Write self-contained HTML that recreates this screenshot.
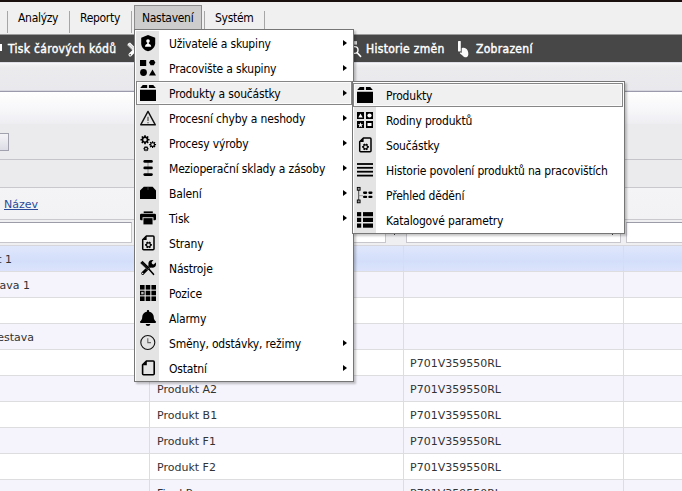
<!DOCTYPE html><html><head><meta charset="utf-8"><title>Nastavení</title><style>
html,body{margin:0;padding:0}
body{width:682px;height:491px;overflow:hidden;position:relative;background:#f0f0f0;font-family:"DejaVu Sans Condensed","DejaVu Sans","Liberation Sans",sans-serif;font-size:12px;color:#000}
div,span,a,svg{position:absolute;box-sizing:border-box}
.ic{overflow:visible}
.topbar{left:0;top:0;width:682px;height:2px;background:#1a100d}
.msep{top:11px;width:1px;height:22px;background:#a6a6a6}
.mi{top:10px;height:16px;line-height:16px;white-space:nowrap;letter-spacing:-0.3px}
.mact{left:134px;top:5px;width:68px;height:25px;background:#cdcdcd;border:1px solid #8c8c8c}
.toolbar{left:0;top:34px;width:682px;height:28px;background:#474747;border-top:1px solid #9c9c9c}
.tb{top:41px;height:16px;line-height:16px;color:#fff;-webkit-text-stroke:0.4px #fff;white-space:nowrap;letter-spacing:0.3px}
.band1{left:0;top:62px;width:682px;height:29px;background:linear-gradient(#d2d2de 0,#f7f7fa 1.5px,#f0f0f3 3px,#ebebee 6px,#e9e9ed 100%)}
.line1{left:0;top:90px;width:682px;height:2px;background:linear-gradient(#d6d6de 50%,#9a9aac 50%)}
.band2{left:0;top:92px;width:682px;height:32px;background:linear-gradient(#ffffff,#f6f6f9 60%,#eeeef2)}
.band3{left:0;top:124px;width:682px;height:35px;background:#ebebee}
.line2{left:0;top:159px;width:682px;height:1px;background:#c4c4ca}
.band4{left:0;top:160px;width:682px;height:27px;background:#ebebee}
.line3{left:0;top:187px;width:682px;height:1px;background:#c9c9cd}
.hdr{left:0;top:188px;width:682px;height:32px;background:linear-gradient(#f4f4f6,#f2f2f4);border-bottom:1px solid #c9c9ce}
.flt{left:0;top:220px;width:682px;height:26px;background:#efeff2;border-bottom:1px solid #d6d6dc}
.inp{top:222px;height:21px;background:#fff;border:1px solid #c6c6cc;border-top-color:#9c9ca8}
.btn{left:-2px;top:133px;width:11px;height:18px;border:1px solid #a2a2ae;background:linear-gradient(#f4f4f8,#dcdce6)}
.hl{font-family:"DejaVu Sans","Liberation Sans",sans-serif;font-size:11px;color:#2c4a9a;text-decoration:underline;left:4px;top:197px;line-height:15px;white-space:nowrap}
.row{left:0;width:682px;height:26px;border-bottom:1px solid #dddde0}
.odd{background:#f5f3fb}
.even{background:#fff}
.sel{background:linear-gradient(#dfe7fc,#d3defa 60%,#dbe4fb)}
.cell{font-family:"DejaVu Sans","Liberation Sans",sans-serif;font-size:11px;color:#333;line-height:14px;white-space:nowrap}
.vsep{width:1px;background:#dddde0;top:246px;height:245px}
.pop{background:#fff;border:1px solid #767676;box-shadow:2px 2px 2px rgba(0,0,0,0.22)}
.icol{background:#e4e4e4}
.it{height:16px;line-height:16px;white-space:nowrap;letter-spacing:-0.17px}
.hi{background:#f0f0f0;border:1px solid #868686;box-shadow:inset 0 0 0 1px #fbfbfb}
.arr{width:0;height:0;border-left:4px solid #000;border-top:3.5px solid transparent;border-bottom:3.5px solid transparent}
</style></head><body>
<div class="topbar"></div>
<div class="msep" style="left:7px"></div>
<div class="msep" style="left:69px"></div>
<div class="msep" style="left:131px"></div>
<div class="msep" style="left:204px"></div>
<div class="msep" style="left:264px"></div>
<div class="mact"></div>
<span class="mi" style="left:18px">Analýzy</span>
<span class="mi" style="left:80px">Reporty</span>
<span class="mi" style="left:142px">Nastavení</span>
<span class="mi" style="left:215px">Systém</span>
<div class="toolbar"></div>
<div style="left:0;top:44px;width:2px;height:7px;background:#fff"></div>
<span class="tb" style="left:8px">Tisk čárových kódů</span>
<span class="tb" style="left:366px">Historie změn</span>
<span class="tb" style="left:476px">Zobrazení</span>
<svg class="ic" style="left:126px;top:42px" width="16" height="16" viewBox="0 0 16 16" ><path d="M2,1.4L4,0.6L9,5.6L6.4,8.2L1.4,3.2Z" fill="#fff"/><path d="M3,1.6L7.6,6.2M2,2.8L6.6,7.4" stroke="#777" stroke-width="0.5"/><path d="M9,8L4.2,12.8" stroke="#fff" stroke-width="3.4" stroke-linecap="round"/><circle cx="4.2" cy="12.8" r="0.8" fill="#464646"/></svg>
<svg class="ic" style="left:346px;top:40px" width="16" height="18" viewBox="0 0 16 18" ><rect x="8.2" y="1.1" width="2.8" height="3.5" fill="#dcdcdc"/><circle cx="8.6" cy="10" r="3.4" fill="none" stroke="#fff" stroke-width="1.4"/><path d="M11.2,12.8L14.6,16.4" stroke="#fff" stroke-width="1.6" stroke-linecap="round"/></svg>
<svg class="ic" style="left:456px;top:40px" width="14" height="18" viewBox="0 0 14 18" ><rect x="2" y="1" width="2.8" height="10.4" rx="0.6" fill="#fafafa"/><path d="M5.7,8.3C7.5,7.3 10.5,7.9 11.6,10.4C12.8,13 12.6,16 11,17C9.5,17.8 7.5,17 6.5,15.5L4,13.6C3.6,13 4.2,12.4 5,12.6L5.7,12.9Z" fill="#fafafa"/></svg>
<div class="band1"></div>
<div class="line1"></div>
<div class="band2"></div>
<div class="band3"></div>
<div class="line2"></div>
<div class="band4"></div>
<div class="line3"></div>
<div class="hdr"></div>
<div class="flt"></div>
<div class="btn"></div>
<a class="hl">Název</a>
<div class="inp" style="left:-2px;width:134px"></div>
<div class="inp" style="left:150px;width:236px"></div>
<div class="inp" style="left:406px;width:215px"></div>
<div class="inp" style="left:626px;width:60px"></div>
<div style="left:394px;top:233px;width:1px;height:2px;background:#444"></div>
<div style="left:612px;top:233px;width:1px;height:2px;background:#444"></div>
<div class="row sel" style="top:246px"></div>
<span class="cell" style="right:682px;top:253px"></span>
<div class="row odd" style="top:272px"></div>
<span class="cell" style="right:682px;top:279px"></span>
<div class="row even" style="top:298px"></div>
<div class="row odd" style="top:324px"></div>
<span class="cell" style="right:682px;top:331px"></span>
<div class="row even" style="top:350px"></div>
<div class="row odd" style="top:376px"></div>
<div class="row even" style="top:402px"></div>
<div class="row odd" style="top:428px"></div>
<div class="row even" style="top:454px"></div>
<div class="row odd" style="top:480px"></div>
<span class="cell" style="left:157px;top:357px">Produkt A1</span>
<span class="cell" style="left:410px;top:357px">P701V359550RL</span>
<span class="cell" style="left:157px;top:383px">Produkt A2</span>
<span class="cell" style="left:410px;top:383px">P701V359550RL</span>
<span class="cell" style="left:157px;top:409px">Produkt B1</span>
<span class="cell" style="left:410px;top:409px">P701V359550RL</span>
<span class="cell" style="left:157px;top:435px">Produkt F1</span>
<span class="cell" style="left:410px;top:435px">P701V359550RL</span>
<span class="cell" style="left:157px;top:461px">Produkt F2</span>
<span class="cell" style="left:410px;top:461px">P701V359550RL</span>
<span class="cell" style="left:157px;top:487px">Final Pro</span>
<span class="cell" style="left:410px;top:487px">P701V359550RL</span>
<span class="cell" style="left:-188px;width:200px;text-align:right;top:253px">t 1</span>
<span class="cell" style="left:-170px;width:200px;text-align:right;top:279px">ava 1</span>
<span class="cell" style="left:-166px;width:200px;text-align:right;top:331px">estava</span>
<div class="vsep" style="left:149px"></div>
<div class="vsep" style="left:403px"></div>
<div class="vsep" style="left:623px"></div>
<div class="pop" style="left:134px;top:29px;width:220px;height:353px"></div>
<div class="icol" style="left:136px;top:31px;width:23px;height:350px"></div>
<div class="hi" style="left:136px;top:81px;width:216px;height:24px"></div>
<svg class="ic" style="left:140px;top:35px" width="16" height="17" viewBox="0 0 16 17" ><path d="M8,0L15.2,2.8V8.2C15.2,12 12.2,15.2 8,16.3C3.8,15.2 1.2,12 1.2,8.2V2.8Z"/><circle cx="8" cy="6.1" r="1.8" fill="#fff"/><rect x="7.2" y="7.4" width="1.6" height="2" fill="#fff"/><path d="M5,11.8C5,9.7 6.3,8.8 8,8.8C9.7,8.8 11.2,9.7 11.2,11.8Z" fill="#fff"/></svg>
<span class="it" style="left:169px;top:36px">Uživatelé a skupiny</span>
<div class="arr" style="left:343px;top:40.0px"></div>
<svg class="ic" style="left:140px;top:60px" width="16" height="16" viewBox="0 0 16 16" ><rect x="0" y="0" width="6.2" height="6"/><path d="M10.6,0h3.2l1.6,2.6l-1.6,2.6h-3.2l-1.6,-2.6z"/><circle cx="3.5" cy="12.5" r="3.4"/><path d="M12.5,9.4L16,15.4H9Z"/></svg>
<span class="it" style="left:169px;top:61px">Pracovište a skupiny</span>
<div class="arr" style="left:343px;top:65.0px"></div>
<svg class="ic" style="left:140px;top:85px" width="16" height="16" viewBox="0 0 16 16" ><path d="M2.8,0H7.2V2.9H0.2Z M8.9,0H13.2L15.8,2.9H8.9Z M0,4.8H16V16H0Z"/></svg>
<span class="it" style="left:169px;top:86px">Produkty a součástky</span>
<div class="arr" style="left:343px;top:90.0px"></div>
<svg class="ic" style="left:140px;top:110px" width="16" height="16" viewBox="0 0 16 16" ><path d="M8,1.4L15.3,14.8H0.7Z" fill="none" stroke="#111" stroke-width="1.4" stroke-linejoin="round"/><path d="M8,6.8V11" stroke="#555" stroke-width="1.3"/><circle cx="8" cy="12.7" r="0.75" fill="#555"/></svg>
<span class="it" style="left:169px;top:111px">Procesní chyby a neshody</span>
<div class="arr" style="left:343px;top:115.0px"></div>
<svg class="ic" style="left:140px;top:135px" width="16" height="16" viewBox="0 0 16 16" ><path fill-rule="evenodd" d="M8.17,3.78 L9.54,3.94 L9.54,5.46 L8.17,5.62 L7.89,6.29 L8.74,7.37 L7.67,8.44 L6.59,7.59 L5.92,7.87 L5.76,9.24 L4.24,9.24 L4.08,7.87 L3.41,7.59 L2.33,8.44 L1.26,7.37 L2.11,6.29 L1.83,5.62 L0.46,5.46 L0.46,3.94 L1.83,3.78 L2.11,3.11 L1.26,2.03 L2.33,0.96 L3.41,1.81 L4.08,1.53 L4.24,0.16 L5.76,0.16 L5.92,1.53 L6.59,1.81 L7.67,0.96 L8.74,2.03 L7.89,3.11Z M3.30,4.70 a1.70,1.70 0 1,0 3.40,0 a1.70,1.70 0 1,0 -3.40,0Z"/><path fill-rule="evenodd" d="M15.00,8.90 L16.05,9.03 L16.05,10.17 L15.00,10.30 L14.79,10.80 L15.45,11.63 L14.63,12.45 L13.80,11.79 L13.30,12.00 L13.17,13.05 L12.03,13.05 L11.90,12.00 L11.40,11.79 L10.57,12.45 L9.75,11.63 L10.41,10.80 L10.20,10.30 L9.15,10.17 L9.15,9.03 L10.20,8.90 L10.41,8.40 L9.75,7.57 L10.57,6.75 L11.40,7.41 L11.90,7.20 L12.03,6.15 L13.17,6.15 L13.30,7.20 L13.80,7.41 L14.63,6.75 L15.45,7.57 L14.79,8.40Z M11.30,9.60 a1.30,1.30 0 1,0 2.60,0 a1.30,1.30 0 1,0 -2.60,0Z"/><path fill-rule="evenodd" d="M7.82,13.17 L8.66,13.26 L8.66,14.14 L7.82,14.23 L7.66,14.62 L8.20,15.27 L7.57,15.90 L6.92,15.36 L6.53,15.52 L6.44,16.36 L5.56,16.36 L5.47,15.52 L5.08,15.36 L4.43,15.90 L3.80,15.27 L4.34,14.62 L4.18,14.23 L3.34,14.14 L3.34,13.26 L4.18,13.17 L4.34,12.78 L3.80,12.13 L4.43,11.50 L5.08,12.04 L5.47,11.88 L5.56,11.04 L6.44,11.04 L6.53,11.88 L6.92,12.04 L7.57,11.50 L8.20,12.13 L7.66,12.78Z M5.10,13.70 a0.90,0.90 0 1,0 1.80,0 a0.90,0.90 0 1,0 -1.80,0Z"/></svg>
<span class="it" style="left:169px;top:136px">Procesy výroby</span>
<div class="arr" style="left:343px;top:140.0px"></div>
<svg class="ic" style="left:140px;top:160px" width="16" height="16" viewBox="0 0 16 16" ><path d="M8,1.4V14.6" stroke="#777" stroke-width="0.7"/><rect x="3.4" y="0.1" width="9.4" height="2.6" rx="1.3"/><rect x="3.4" y="6.6" width="9.4" height="2.6" rx="1.3"/><rect x="3.4" y="13.3" width="9.4" height="2.6" rx="1.3"/></svg>
<span class="it" style="left:169px;top:161px">Mezioperační sklady a zásoby</span>
<div class="arr" style="left:343px;top:165.0px"></div>
<svg class="ic" style="left:140px;top:185px" width="16" height="16" viewBox="0 0 16 16" ><path d="M3.8,1.7H12.6L16,5.4V14.1H0V5.4Z"/><path d="M8,1.7V5" stroke="#777" stroke-width="0.5"/></svg>
<span class="it" style="left:169px;top:186px">Balení</span>
<div class="arr" style="left:343px;top:190.0px"></div>
<svg class="ic" style="left:140px;top:210px" width="16" height="16" viewBox="0 0 16 16" ><rect x="3.7" y="1.4" width="9.1" height="1.7"/><rect x="0" y="3.7" width="16" height="6.6" rx="1.2"/><rect x="3" y="7.7" width="10" height="7.2" fill="#000" stroke="#e4e4e4" stroke-width="0.9"/></svg>
<span class="it" style="left:169px;top:211px">Tisk</span>
<div class="arr" style="left:343px;top:215.0px"></div>
<svg class="ic" style="left:140px;top:235px" width="16" height="16" viewBox="0 0 16 16" ><path d="M6.4,1H13a1,1 0 0 1 1,1V13.8a1,1 0 0 1 -1,1H3.7a1,1 0 0 1 -1,-1V4.8Z" fill="none" stroke="#000" stroke-width="1.5" stroke-linejoin="round"/><path d="M6.6,1V5H2.7Z"/><path fill-rule="evenodd" d="M10.92,8.94 L11.88,8.99 L11.88,10.81 L10.92,10.86 L10.54,11.51 L10.97,12.37 L9.41,13.28 L8.88,12.47 L8.12,12.47 L7.59,13.28 L6.03,12.37 L6.46,11.51 L6.08,10.86 L5.12,10.81 L5.12,8.99 L6.08,8.94 L6.46,8.29 L6.03,7.43 L7.59,6.52 L8.12,7.33 L8.88,7.33 L9.41,6.52 L10.97,7.43 L10.54,8.29Z M7.10,9.90 a1.40,1.40 0 1,0 2.80,0 a1.40,1.40 0 1,0 -2.80,0Z"/></svg>
<span class="it" style="left:169px;top:236px">Strany</span>
<svg class="ic" style="left:140px;top:260px" width="16" height="16" viewBox="0 0 16 16" ><circle cx="12.2" cy="3.9" r="3.8"/><path d="M13.3,2.7L17,-1" stroke="#e4e4e4" stroke-width="3.3" stroke-linecap="round"/><path d="M9.8,6.3L2.7,13.4" stroke="#000" stroke-width="2.9" stroke-linecap="round"/><circle cx="2.6" cy="13.5" r="0.8" fill="#e4e4e4"/><path d="M8.6,8.8L13.5,14.3" stroke="#000" stroke-width="1.6" stroke-linecap="round"/><path d="M0.1,3.0L2.5,0.7L9.6,7.4L7.2,9.8Z" stroke="#e4e4e4" stroke-width="0.3"/><path d="M2.2,2.6L7.9,8.1M1.4,3.4L7.1,8.9" stroke="#666" stroke-width="0.3"/></svg>
<span class="it" style="left:169px;top:261px">Nástroje</span>
<svg class="ic" style="left:140px;top:285px" width="16" height="16" viewBox="0 0 16 16" ><rect x="0.0" y="0.0" width="4.6" height="4.6"/><rect x="5.7" y="0.0" width="4.6" height="4.6"/><rect x="11.4" y="0.0" width="4.6" height="4.6"/><rect x="0.0" y="5.7" width="4.6" height="4.6"/><rect x="5.7" y="5.7" width="4.6" height="4.6"/><rect x="11.4" y="5.7" width="4.6" height="4.6"/><rect x="0.0" y="11.4" width="4.6" height="4.6"/><rect x="5.7" y="11.4" width="4.6" height="4.6"/><rect x="11.4" y="11.4" width="4.6" height="4.6"/><rect x="1.2" y="6.9" width="2.4" height="2.4" fill="#bbb"/></svg>
<span class="it" style="left:169px;top:286px">Pozice</span>
<svg class="ic" style="left:140px;top:310px" width="16" height="16" viewBox="0 0 448 512" preserveAspectRatio="none"><path d="M224 512c35.32 0 63.97-28.65 63.97-64H160.03c0 35.35 28.65 64 63.97 64zm215.39-149.71c-19.32-20.76-55.47-51.99-55.47-154.29 0-77.7-54.48-139.9-127.94-155.16V32c0-17.67-14.32-32-31.98-32s-31.98 14.33-31.98 32v20.84C118.56 68.1 64.08 130.3 64.08 208c0 102.3-36.15 133.53-55.47 154.29-6 6.45-8.66 14.16-8.61 21.71.11 16.4 12.98 32 32.1 32h383.8c19.12 0 32-15.6 32.1-32 .05-7.55-2.61-15.27-8.61-21.71z"/></svg>
<span class="it" style="left:169px;top:311px">Alarmy</span>
<svg class="ic" style="left:140px;top:334px" width="16" height="16" viewBox="0 0 16 16" ><circle cx="7.8" cy="8.5" r="7" fill="none" stroke="#111" stroke-width="1.1"/><path d="M7.8,4.2V8.6H11" fill="none" stroke="#666" stroke-width="1.1"/></svg>
<span class="it" style="left:169px;top:336px">Směny, odstávky, režimy</span>
<div class="arr" style="left:343px;top:340.0px"></div>
<svg class="ic" style="left:140px;top:360px" width="16" height="16" viewBox="0 0 16 16" ><path d="M6.4,1H13.2a1,1 0 0 1 1,1V13.7a1,1 0 0 1 -1,1H3.6a1,1 0 0 1 -1,-1V4.8Z" fill="none" stroke="#000" stroke-width="1.6" stroke-linejoin="round"/><path d="M6.8,0.8V5.2H2.4Z"/></svg>
<span class="it" style="left:169px;top:361px">Ostatní</span>
<div class="arr" style="left:343px;top:365.0px"></div>
<div class="pop" style="left:352px;top:81px;width:273px;height:153px"></div>
<div class="icol" style="left:354px;top:83px;width:22px;height:150px"></div>
<div class="hi" style="left:353px;top:83px;width:270px;height:24px"></div>
<svg class="ic" style="left:357px;top:87px" width="16" height="16" viewBox="0 0 16 16" ><path d="M2.8,0H7.2V2.9H0.2Z M8.9,0H13.2L15.8,2.9H8.9Z M0,4.8H16V16H0Z"/></svg>
<span class="it" style="left:386px;top:88px">Produkty</span>
<svg class="ic" style="left:357px;top:112px" width="16" height="16" viewBox="0 0 16 16" ><rect x="0" y="0" width="7" height="7"/><rect x="9" y="0" width="7" height="7"/><rect x="0" y="9" width="7" height="7"/><rect x="9" y="9" width="7" height="7"/><path d="M3.5,1.5L5.7,5.4H1.3Z" fill="#fff"/><circle cx="12.5" cy="3.5" r="2.1" fill="#fff"/><path d="M3.5,10.3L4.2,12.2L6.2,12.3L4.6,13.5L5.2,15.4L3.5,14.3L1.8,15.4L2.4,13.5L0.8,12.3L2.8,12.2Z" fill="#fff"/><rect x="10.5" y="11" width="4" height="3" fill="#fff"/></svg>
<span class="it" style="left:386px;top:113px">Rodiny produktů</span>
<svg class="ic" style="left:357px;top:137px" width="16" height="16" viewBox="0 0 16 16" ><path d="M6.4,1H13a1,1 0 0 1 1,1V13.8a1,1 0 0 1 -1,1H3.7a1,1 0 0 1 -1,-1V4.8Z" fill="none" stroke="#000" stroke-width="1.5" stroke-linejoin="round"/><path d="M6.6,1V5H2.7Z"/><path fill-rule="evenodd" d="M10.92,8.94 L11.88,8.99 L11.88,10.81 L10.92,10.86 L10.54,11.51 L10.97,12.37 L9.41,13.28 L8.88,12.47 L8.12,12.47 L7.59,13.28 L6.03,12.37 L6.46,11.51 L6.08,10.86 L5.12,10.81 L5.12,8.99 L6.08,8.94 L6.46,8.29 L6.03,7.43 L7.59,6.52 L8.12,7.33 L8.88,7.33 L9.41,6.52 L10.97,7.43 L10.54,8.29Z M7.10,9.90 a1.40,1.40 0 1,0 2.80,0 a1.40,1.40 0 1,0 -2.80,0Z"/></svg>
<span class="it" style="left:386px;top:138px">Součástky</span>
<svg class="ic" style="left:357px;top:162px" width="16" height="16" viewBox="0 0 16 16" ><rect x="0" y="1.1" width="16" height="1.8"/><rect x="0" y="4.9" width="16" height="1.8"/><rect x="0" y="8.8" width="16" height="1.8"/><rect x="0" y="12.7" width="16" height="1.8"/></svg>
<span class="it" style="left:386px;top:163px">Historie povolení produktů na pracovištích</span>
<svg class="ic" style="left:357px;top:187px" width="16" height="16" viewBox="0 0 16 16" ><path d="M1.7,3V13.4" stroke="#222" stroke-width="0.8"/><path d="M1.7,8.7H6" stroke="#888" stroke-width="0.8"/><rect x="0.3" y="0.4" width="2.8" height="2.8" fill="#999" stroke="#000" stroke-width="0.9"/><rect x="0.3" y="13" width="2.8" height="2.8" fill="#999" stroke="#000" stroke-width="0.9"/><rect x="6" y="4.6" width="4.2" height="2.3" rx="1.1"/><rect x="11.3" y="4.6" width="4.2" height="2.3" rx="1.1"/><rect x="6" y="8.8" width="4.2" height="2.3" rx="1.1"/><rect x="11.3" y="8.8" width="4.2" height="2.3" rx="1.1"/></svg>
<span class="it" style="left:386px;top:188px">Přehled dědění</span>
<svg class="ic" style="left:357px;top:212px" width="16" height="16" viewBox="0 0 16 16" ><rect x="0" y="0.1" width="4.2" height="4.2"/><rect x="6" y="0.1" width="10" height="4.2"/><rect x="0" y="5.8" width="4.2" height="4.2"/><rect x="6" y="5.8" width="10" height="4.2"/><rect x="0" y="11.5" width="4.2" height="4.2"/><rect x="6" y="11.5" width="10" height="4.2"/></svg>
<span class="it" style="left:386px;top:213px">Katalogové parametry</span>
</body></html>
